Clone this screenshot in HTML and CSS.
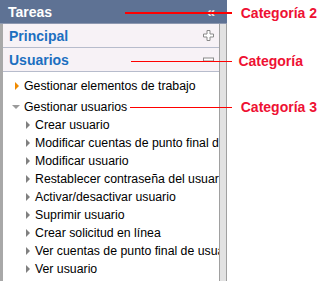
FILE: index.html
```html
<!DOCTYPE html>
<html lang="es">
<head>
    <meta charset="UTF-8">
    <title>Tareas</title>
    <link rel="stylesheet" href="styles.css">
</head>
<body>
    <div class="panel">
        <div class="panel-head">
            <span>Tareas</span>
            <span class="collapse">&laquo;</span>
        </div>
        <div class="panel-body">
            <div class="list">
                <div class="cat">
                    <span>Principal</span>
                    <svg width="11" height="11" viewBox="0 0 11 11"><path d="M4 0.5h3v3.5h3.5v3h-3.5v3.5h-3v-3.5h-3.5v-3h3.5z" fill="#fff" stroke="#8a8a8a"/></svg>
                </div>
                <div class="cat">
                    <span>Usuarios</span>
                    <svg width="11" height="11" viewBox="0 0 11 11"><rect x="0.5" y="4" width="10" height="3" fill="#fff" stroke="#8a8a8a"/></svg>
                </div>
                <ul class="tree">
                    <li class="node closed">Gestionar elementos de trabajo</li>
                    <li class="node open">Gestionar usuarios</li>
                    <li class="leaf">Crear usuario</li>
                    <li class="leaf">Modificar cuentas de punto final de usuario</li>
                    <li class="leaf">Modificar usuario</li>
                    <li class="leaf">Restablecer contraseña del usuario</li>
                    <li class="leaf">Activar/desactivar usuario</li>
                    <li class="leaf">Suprimir usuario</li>
                    <li class="leaf">Crear solicitud en línea</li>
                    <li class="leaf">Ver cuentas de punto final de usuario</li>
                    <li class="leaf">Ver usuario</li>
                </ul>
            </div>
            <div class="strip"></div>
        </div>
    </div>

    <div class="note note-1"><span class="line"></span>Categoría 2</div>
    <div class="note note-2"><span class="line"></span>Categoría</div>
    <div class="note note-3"><span class="line"></span>Categoría 3</div>
</body>
</html>
```

FILE: styles.css
```css
body {
    margin: 0;
    padding: 0;
    background: #ffffff;
    font-family: "Liberation Sans", Arial, sans-serif;
    position: relative;
    height: 281px;
    overflow: hidden;
}
.panel {
    width: 227px;
    height: 281px;
    display: flex;
    flex-direction: column;
}
.panel-head {
    height: 23px;
    background: #5e7294;
    color: #ffffff;
    font-weight: bold;
    font-size: 14px;
    display: flex;
    align-items: center;
    justify-content: space-between;
    padding: 0 12px 0 8px;
    border-bottom: 1px solid #8d98b0;
}
.collapse {
    font-size: 15px;
    color: #e8e8e8;
}
.panel-body {
    flex: 1;
    display: flex;
}
.list {
    flex: 1;
    border-left: 3px solid #a8a8a8;
    border-right: 1px solid #a0a0a0;
    overflow: hidden;
}
.strip {
    width: 6px;
    background: #e2e2e2;
    border-right: 1px solid #a0a0a0;
}
.cat {
    height: 23px;
    background: #f7f2f6;
    border-bottom: 1px solid #b7bccc;
    display: flex;
    align-items: center;
    justify-content: space-between;
    padding: 0 5px 0 6px;
    color: #1c6fc0;
    font-weight: bold;
    font-size: 14px;
}
.tree {
    list-style: none;
    margin: 0;
    padding: 5px 0 0 0;
    font-size: 12.3px;
    color: #000000;
}
.tree li {
    white-space: nowrap;
    height: 18px;
    line-height: 18px;
    position: relative;
}
.node {
    padding-left: 21px;
}
.node.closed {
    margin-bottom: 3px;
}
.leaf {
    padding-left: 32px;
}
.tree li::before {
    content: "";
    position: absolute;
    width: 0;
    height: 0;
}
.node.closed::before {
    left: 12px;
    top: 5px;
    border-top: 4px solid transparent;
    border-bottom: 4px solid transparent;
    border-left: 4px solid #f08a00;
}
.node.open::before {
    left: 9px;
    top: 7px;
    border-left: 4px solid transparent;
    border-right: 4px solid transparent;
    border-top: 4px solid #9a9a9a;
}
.leaf::before {
    left: 23px;
    top: 5px;
    border-top: 4px solid transparent;
    border-bottom: 4px solid transparent;
    border-left: 4px solid #808080;
}
.note {
    position: absolute;
    z-index: 2;
    left: 0;
    right: 0;
    height: 16px;
    line-height: 16px;
    color: #ee1133;
    font-weight: bold;
    font-size: 14px;
    text-align: right;
    padding-right: 5px;
}
.note .line {
    position: absolute;
    top: 8px;
    right: 90px;
    height: 1px;
    background: #ff0000;
}
.note-1 { top: 5px; }
.note-1 .line { left: 125px; top: 7px; height: 2px; }
.note-2 { top: 53px; padding-right: 19px; }
.note-2 .line { left: 131px; }
.note-3 { top: 99px; }
.note-3 .line { left: 130px; }
```
